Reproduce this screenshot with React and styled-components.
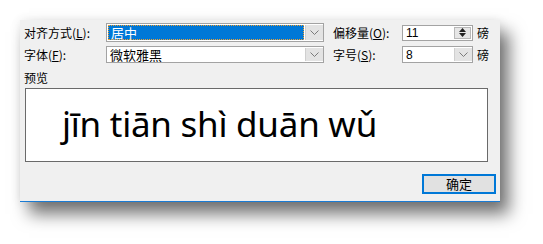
import React from "react";
import styled, { createGlobalStyle } from "styled-components";

const Global = createGlobalStyle`
  html, body { margin: 0; padding: 0; background: #ffffff; }
  body { font-family: "Noto Sans CJK SC", "Noto Sans", sans-serif; font-size: 12px; color: #000; }
`;

const Page = styled.div`
  padding: 20px 0 0 20px;
  width: 543px;
  height: 244px;
  box-sizing: border-box;
  overflow: hidden;
`;

const Dialog = styled.div`
  box-sizing: border-box;
  width: 480px;
  height: 182px;
  background: #f0f0f0;
  border-bottom: 1px solid #1a7bd3;
  box-shadow: 9px 12px 16px rgba(0, 0, 0, 0.55), 0 0 10px rgba(0, 0, 0, 0.08);
  display: flex;
  flex-direction: column;
  padding: 0 4px 0 4px;
`;

const Row = styled.div`
  display: flex;
  align-items: center;
  height: ${(p) => p.$h}px;
  margin-top: ${(p) => p.$mt}px;
`;

const Label = styled.span`
  width: ${(p) => p.$w}px;
  margin-left: ${(p) => p.$ml || 0}px;
  flex: none;
  line-height: 14px;
  white-space: nowrap;
  u { text-decoration: underline; text-underline-offset: 1px; }
`;

const Combo = styled.div`
  box-sizing: border-box;
  width: ${(p) => p.$w}px;
  height: ${(p) => p.$h}px;
  background: #fff;
  border: 1px solid #a3a3a3;
  display: flex;
  align-items: stretch;
  padding: 1px 0 1px 1px;
`;

const Value = styled.div`
  flex: 1;
  display: flex;
  align-items: center;
  padding-left: 2px;
  line-height: 14px;
  font-size: ${(p) => (p.$latin ? "12px" : "13px")};
  font-family: ${(p) => (p.$latin ? '"Liberation Sans", sans-serif' : '"Noto Sans CJK SC", sans-serif')};
`;

const Selected = styled.div`
  flex: 1;
  display: flex;
  align-items: center;
  background: #0078d7;
  color: #fff;
  font-size: 13px;
  padding-left: 3px;
  outline: 1px dotted #f0a030;
  outline-offset: -1px;
  margin-right: 1px;
`;

const DropBtn = styled.div`
  width: 17px;
  flex: none;
  background: #e3e3e3;
  border-left: 1px solid #cfcfcf;
  display: flex;
  align-items: center;
  justify-content: center;
`;

const SpinBtn = styled.div`
  width: 15px;
  flex: none;
  margin: 0 1px 0 0;
  border: 1px solid #b8b8b8;
  background: #e6e6e6;
  display: flex;
  flex-direction: column;
  align-items: center;
  justify-content: center;
  gap: 1px;
`;

const Unit = styled.span`
  margin-left: 4px;
  line-height: 14px;
`;

const PreviewLabel = styled.div`
  margin-top: 8px;
  line-height: 14px;
  height: 14px;
`;

const PreviewBox = styled.div`
  box-sizing: border-box;
  margin: 3px 0 0 1px;
  width: 463px;
  height: 74px;
  background: #fff;
  border: 1px solid #6a6a6a;
  display: flex;
  align-items: center;
  padding: 0 0 4px 36px;
  font-family: "Noto Sans", "Open Sans", sans-serif;
  font-size: 35px;
  letter-spacing: -0.25px;
  white-space: nowrap;
`;

const Footer = styled.div`
  display: flex;
  justify-content: flex-end;
  margin-top: 12px;
`;

const Button = styled.button`
  box-sizing: border-box;
  width: 74px;
  height: 20px;
  border: 2px solid #0078d7;
  background: #e1e1e1;
  font-family: "Noto Sans CJK SC", sans-serif;
  font-size: 13px;
  padding: 0;
  color: #000;
  line-height: 14px;
`;

const Chevron = () => (
  <svg width="9" height="5" viewBox="0 0 9 5">
    <path d="M0.5 0.5 L4.5 4.5 L8.5 0.5" fill="none" stroke="#7a7a7a" strokeWidth="1" />
  </svg>
);

const Tri = ({ up }) => (
  <svg width="7" height="4" viewBox="0 0 7 4">
    <path d={up ? "M0 4 L3.5 0 L7 4 Z" : "M0 0 L3.5 4 L7 0 Z"} fill="#222" />
  </svg>
);

export default function App() {
  return (
    <Page>
      <Global />
      <Dialog>
        <Row $h={19} $mt={3}>
          <Label $w={82}>对齐方式(<u>L</u>):</Label>
          <Combo $w={218} $h={19}>
            <Selected>居中</Selected>
            <DropBtn><Chevron /></DropBtn>
          </Combo>
          <Label $w={69} $ml={9}>偏移量(<u>O</u>):</Label>
          <Combo $w={71} $h={16}>
            <Value $latin>11</Value>
            <SpinBtn><Tri up /><Tri /></SpinBtn>
          </Combo>
          <Unit>磅</Unit>
        </Row>
        <Row $h={17} $mt={4}>
          <Label $w={82}>字体(<u>F</u>):</Label>
          <Combo $w={218} $h={17}>
            <Value>微软雅黑</Value>
            <DropBtn><Chevron /></DropBtn>
          </Combo>
          <Label $w={69} $ml={9}>字号(<u>S</u>):</Label>
          <Combo $w={71} $h={17}>
            <Value $latin>8</Value>
            <DropBtn><Chevron /></DropBtn>
          </Combo>
          <Unit>磅</Unit>
        </Row>
        <PreviewLabel>预览</PreviewLabel>
        <PreviewBox>jīn tiān shì duān wǔ</PreviewBox>
        <Footer>
          <Button>确定</Button>
        </Footer>
      </Dialog>
    </Page>
  );
}
